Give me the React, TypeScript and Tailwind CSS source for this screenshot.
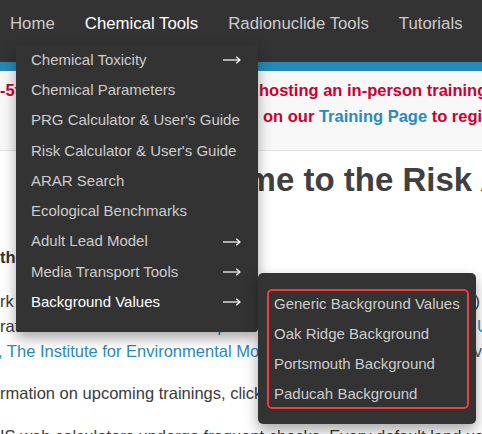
import React from "react";

const Arrow = () => (
  <svg width="18" height="10" viewBox="0 0 18 10" fill="none" stroke="#ffffff" strokeWidth="1.2">
    <path d="M0 5H17" />
    <path d="M13.2 1.8L17 5L13.2 8.2" />
  </svg>
);

const items: { label: string; arrow?: boolean; active?: boolean }[] = [
  { label: "Chemical Toxicity", arrow: true },
  { label: "Chemical Parameters" },
  { label: "PRG Calculator & User's Guide" },
  { label: "Risk Calculator & User's Guide" },
  { label: "ARAR Search" },
  { label: "Ecological Benchmarks" },
  { label: "Adult Lead Model", arrow: true },
  { label: "Media Transport Tools", arrow: true },
  { label: "Background Values", arrow: true, active: true },
];

const subItems = [
  "Generic Background Values",
  "Oak Ridge Background",
  "Portsmouth Background",
  "Paducah Background",
];

export default function App() {
  return (
    <div className="relative w-[482px] h-[434px] overflow-hidden bg-white font-['Liberation_Sans',Arial,sans-serif]">
      {/* Top navigation */}
      <nav className="h-[62px] bg-[#333333]">
        <div className="h-[48px] flex items-center pl-[10px] gap-[30px] text-[16.8px] whitespace-nowrap">
          <span className="text-[#cccccc]">Home</span>
          <span className="text-white">Chemical Tools</span>
          <span className="text-[#cccccc]">Radionuclide Tools</span>
          <span className="text-[#cccccc]">Tutorials</span>
        </div>
      </nav>
      <div className="h-[9px] bg-[#2689b7]" />

      {/* Announcement */}
      <div className="h-[80px] bg-[#f8f8f8] border-b border-[#e2e2e2] pt-[6px] text-[16.5px] font-bold text-[#cc0033] leading-[26px] whitespace-nowrap overflow-hidden">
        <div className="flex">
          <span className="inline-block w-[259px] shrink-0 overflow-hidden">-5th, RAIS will be</span>
          <span>hosting an in-person training session</span>
        </div>
        <div className="flex">
          <span className="inline-block w-[263px] shrink-0" />
          <span>
            on our <span className="text-[#2a8abd]">Training Page</span> to register.
          </span>
        </div>
      </div>

      {/* Main content */}
      <div className="text-[16.5px] text-[#3a3a3a] leading-[25px] whitespace-nowrap">
        <h1 className="mt-[9px] ml-[150px] text-[33px] leading-[40px] font-bold text-[#404040]">
          Welcome to the Risk Assessment Information System
        </h1>
        <p className="mt-[45px] font-bold text-[#333333]">the RAIS</p>
        <div className="mt-[19px]">
          <div className="flex justify-between overflow-hidden">
            <span className="min-w-0 overflow-hidden">rk and the RAIS team welcome you</span>
            <span className="shrink-0 pr-[2px]">)</span>
          </div>
          <div className="overflow-hidden">
            ration between{" "}
            <span className="text-[#2a8abd]">
              United Cleanup Oak Ridge, LLC (UCOR) and the University of Tennessee and
            </span>
          </div>
          <div className="flex justify-between overflow-hidden">
            <span className="min-w-0 overflow-hidden text-[#2a8abd] ml-[-2px]">
              , The Institute for Environmental Modeling (TIEM) at the University
            </span>
            <span className="shrink-0 text-[#555555]">rv</span>
          </div>
        </div>
        <p className="mt-[17px] overflow-hidden">rmation on upcoming trainings, click here.</p>
        <p className="mt-[18px] overflow-hidden">
          IS web calculators undergo frequent checks. Every default land use and exposure
        </p>
      </div>

      {/* Dropdown menu */}
      <div className="absolute left-[16px] top-[45px] w-[242px] bg-[#333333] rounded-b-[4px] pb-[15px] shadow-[0_6px_14px_rgba(0,0,0,0.35)]">
        {items.map((it) => (
          <div
            key={it.label}
            className={`h-[30.25px] flex items-center justify-between pl-[15px] pr-[17px] text-[15px] whitespace-nowrap ${
              it.active ? "text-white" : "text-[#cccccc]"
            }`}
          >
            <span>{it.label}</span>
            {it.arrow ? <Arrow /> : null}
          </div>
        ))}
      </div>

      {/* Submenu */}
      <div className="absolute left-[258px] top-[273px] w-[218px] h-[151px] bg-[#333333] rounded-[5px] pt-[16px] shadow-[0_6px_14px_rgba(0,0,0,0.35)]">
        {subItems.map((s) => (
          <div key={s} className="h-[30px] flex items-center pl-[16px] text-[15px] text-[#cccccc] whitespace-nowrap">
            {s}
          </div>
        ))}
        <div className="absolute left-[9px] top-[16px] w-[202px] h-[120px] border-2 border-[#f03c3c] rounded-[5px]" />
      </div>
    </div>
  );
}
